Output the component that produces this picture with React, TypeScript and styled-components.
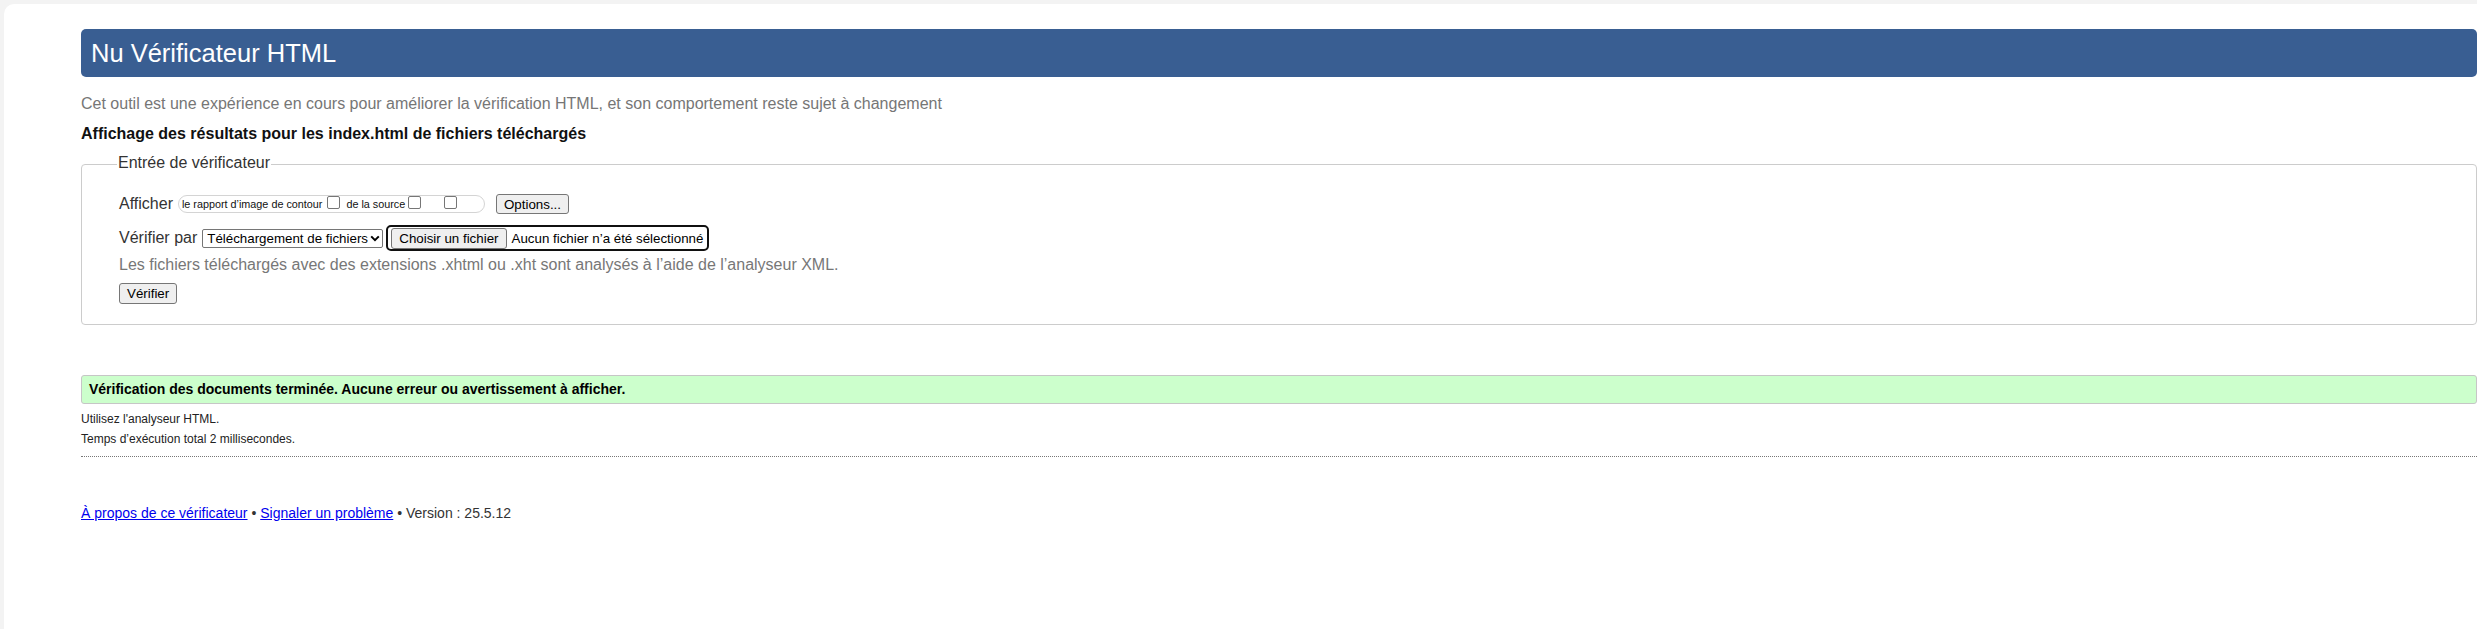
import React from "react";
import styled, { createGlobalStyle } from "styled-components";

const GlobalStyle = createGlobalStyle`
  html, body {
    margin: 0;
    padding: 0;
    background: #f3f3f3;
    overflow: hidden;
  }
  body {
    font-family: "Liberation Sans", Arial, sans-serif;
    color: #222;
  }
  * { box-sizing: border-box; }
`;

const Panel = styled.div`
  margin: 4px 0 0 4px;
  width: calc(100vw - 4px);
  min-height: 625px;
  background: #ffffff;
  border-top-left-radius: 10px;
  padding: 25px 0 0 77px;
  display: flex;
  flex-direction: column;
`;

const Header = styled.h1`
  margin: 0;
  height: 48px;
  background: #395e92;
  border-radius: 5px;
  color: #ffffff;
  font-weight: normal;
  font-size: 25.5px;
  line-height: 48px;
  padding-left: 10px;
`;

const Intro = styled.p`
  margin: 17px 0 0;
  font-size: 16px;
  line-height: 20px;
  color: #767676;
`;

const Status = styled.p`
  margin: 10px 0 0;
  font-size: 16px;
  line-height: 20px;
  font-weight: bold;
  color: #111;
`;

const Fieldset = styled.fieldset`
  margin: 11px 0 0;
  border: 1px solid #cccccc;
  border-radius: 4px;
  padding: 19px 0 20px 35px;
  min-width: 0;
`;

const Legend = styled.legend`
  padding: 0 1px 3px;
  font-size: 16px;
  line-height: 16px;
  color: #333;
`;

const Row = styled.div<{ $top: number; $height: number }>`
  display: flex;
  align-items: center;
  height: ${(p) => p.$height}px;
  margin-top: ${(p) => p.$top}px;
  padding-left: 2px;
`;

const Label = styled.span`
  font-size: 16px;
  line-height: 20px;
  color: #333;
  margin-right: 5px;
`;

const OptionGroup = styled.span`
  display: inline-flex;
  align-items: center;
  height: 18px;
  width: 307px;
  border: 1px solid #d4d4d4;
  border-radius: 9px;
  padding-left: 3px;
  font-size: 10.8px;
  color: #111;
  white-space: nowrap;
`;

const Check = styled.input.attrs({ type: "checkbox" })<{ $left: number }>`
  appearance: none;
  -webkit-appearance: none;
  width: 13px;
  height: 13px;
  margin: 0 0 3px ${(p) => p.$left}px;
  border: 1px solid #767676;
  border-radius: 2px;
  background: #fff;
  flex: none;
`;

const SmallText = styled.span<{ $left?: number }>`
  margin-left: ${(p) => p.$left ?? 0}px;
`;

const Button = styled.button<{ $short?: boolean; $left?: number }>`
  height: ${(p) => (p.$short ? 20 : 21)}px;
  margin-left: ${(p) => p.$left ?? 0}px;
  padding: 0 7px;
  border: 1px solid #767676;
  border-radius: 3px;
  background: #efefef;
  font-family: "Liberation Sans", Arial, sans-serif;
  font-size: 13.333px;
  color: #000;
  white-space: nowrap;
  flex: none;
`;

const SelectWrap = styled.span`
  position: relative;
  display: inline-flex;
  flex: none;
`;

const Select = styled.select`
  appearance: none;
  -webkit-appearance: none;
  width: 181px;
  height: 19px;
  border: 1px solid #767676;
  border-radius: 2px;
  background: #fff;
  padding: 0 11px 0 4px;
  font-family: "Liberation Sans", Arial, sans-serif;
  font-size: 13.333px;
  color: #000;
`;

const Chevron = styled.svg`
  position: absolute;
  right: 3px;
  top: 6px;
  pointer-events: none;
`;

const FileBox = styled.span`
  display: inline-flex;
  align-items: center;
  height: 26px;
  margin-left: 3px;
  border: 2px solid #101010;
  border-radius: 5px;
  padding: 0 4px 0 3px;
  flex: none;
`;

const FileName = styled.span`
  margin-left: 5px;
  font-size: 13.333px;
  color: #000;
  white-space: nowrap;
`;

const Hint = styled.div`
  margin-top: 4px;
  padding-left: 2px;
  font-size: 16px;
  line-height: 20px;
  color: #777;
`;

const Success = styled.div`
  margin-top: 50px;
  height: 29px;
  background: #ccffcc;
  border: 1px solid #c6c6c6;
  border-radius: 3px;
  padding-left: 7px;
  font-size: 14px;
  font-weight: bold;
  line-height: 27px;
  color: #000;
`;

const Details = styled.div`
  margin-top: 5px;
  font-size: 12px;
  line-height: 20px;
  color: #222;
`;

const DottedRule = styled.div`
  margin-top: 7px;
  border-top: 1px dotted #777;
`;

const Footer = styled.p`
  margin: 47px 0 0;
  font-size: 14px;
  line-height: 18px;
  color: #333;
`;

const Link = styled.a`
  color: #0000ee;
  text-decoration: underline;
`;

export default function App() {
  return (
    <>
      <GlobalStyle />
      <Panel>
        <Header>Nu Vérificateur HTML</Header>
        <Intro>
          Cet outil est une expérience en cours pour améliorer la vérification HTML, et son
          comportement reste sujet à changement
        </Intro>
        <Status>Affichage des résultats pour les index.html de fichiers téléchargés</Status>
        <Fieldset>
          <Legend>Entrée de vérificateur</Legend>
          <Row $top={0} $height={22}>
            <Label>Afficher</Label>
            <OptionGroup>
              <SmallText>le rapport d’image de contour</SmallText>
              <Check $left={5} />
              <SmallText $left={6}>de la source</SmallText>
              <Check $left={3} />
              <Check $left={23} />
            </OptionGroup>
            <Button $short $left={11}>Options...</Button>
          </Row>
          <Row $top={10} $height={26}>
            <Label>Vérifier par</Label>
            <SelectWrap>
              <Select defaultValue="file">
                <option value="address">Adresse</option>
                <option value="file">Téléchargement de fichiers</option>
                <option value="textarea">Saisie de texte</option>
              </Select>
              <Chevron width="10" height="7" viewBox="0 0 10 7">
                <path d="M1.2 1.4 L5 5.2 L8.8 1.4" fill="none" stroke="#000" strokeWidth="2" />
              </Chevron>
            </SelectWrap>
            <FileBox>
              <Button>Choisir un fichier</Button>
              <FileName>Aucun fichier n’a été sélectionné</FileName>
            </FileBox>
          </Row>
          <Hint>
            Les fichiers téléchargés avec des extensions .xhtml ou .xht sont analysés à l’aide de
            l’analyseur XML.
          </Hint>
          <Row $top={8} $height={21}>
            <Button>Vérifier</Button>
          </Row>
        </Fieldset>
        <Success>
          Vérification des documents terminée. Aucune erreur ou avertissement à afficher.
        </Success>
        <Details>
          <div>Utilisez l'analyseur HTML.</div>
          <div>Temps d’exécution total 2 millisecondes.</div>
        </Details>
        <DottedRule />
        <Footer>
          <Link href="#">À propos de ce vérificateur</Link> •{" "}
          <Link href="#">Signaler un problème</Link> • Version : 25.5.12
        </Footer>
      </Panel>
    </>
  );
}
